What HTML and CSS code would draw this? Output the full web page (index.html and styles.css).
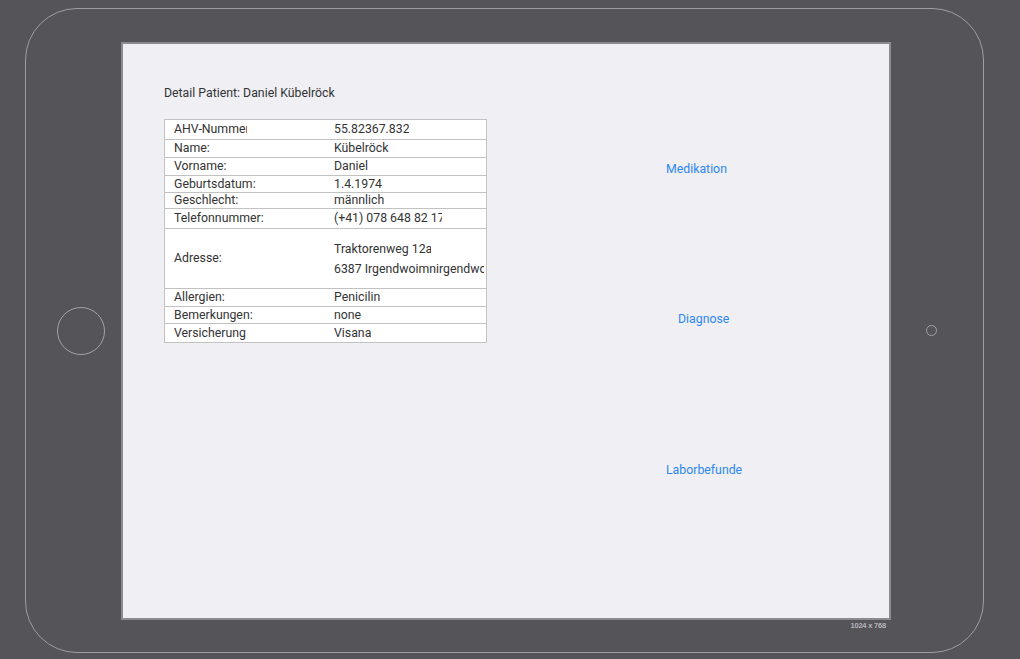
FILE: index.html
```html
<!DOCTYPE html>
<html lang="de">
<head>
<meta charset="utf-8">
<title>Detail Patient</title>
<link rel="stylesheet" href="styles.css">
</head>
<body>
<div class="device">
  <div class="home-button"></div>
  <div class="screen">
    <div class="screen-inner">
      <div class="detail">
        <div class="title">Detail Patient: Daniel Kübelröck</div>
        <div class="table">
          <div class="row h20"><div class="label"><span class="clip-label">AHV-Nummer</span></div><div class="value"><span class="clip-ahv">55.82367.8325</span></div></div>
          <div class="row h18"><div class="label">Name:</div><div class="value">Kübelröck</div></div>
          <div class="row h18"><div class="label">Vorname:</div><div class="value">Daniel</div></div>
          <div class="row h17"><div class="label">Geburtsdatum:</div><div class="value">1.4.1974</div></div>
          <div class="row h16"><div class="label">Geschlecht:</div><div class="value">männlich</div></div>
          <div class="row h20"><div class="label">Telefonnummer:</div><div class="value"><span class="clip-phone">(+41) 078 648 82 17</span></div></div>
          <div class="row h60"><div class="label">Adresse:</div><div class="value address"><span class="clip-street">Traktorenweg 12a</span><span class="clip-addr">6387 Irgendwoimnirgendwo</span></div></div>
          <div class="row h18"><div class="label">Allergien:</div><div class="value">Penicilin</div></div>
          <div class="row h17"><div class="label">Bemerkungen:</div><div class="value">none</div></div>
          <div class="row h19"><div class="label">Versicherung</div><div class="value">Visana</div></div>
        </div>
      </div>
      <div class="links">
        <a class="link link-med" href="#">Medikation</a>
        <a class="link link-diag" href="#">Diagnose</a>
        <a class="link link-labor" href="#">Laborbefunde</a>
      </div>
    </div>
    <div class="size-label">1024 x 768</div>
  </div>
  <div class="side-dot"></div>
</div>
</body>
</html>
```

FILE: styles.css
```css
html, body {
  margin: 0;
  padding: 0;
  background: #555459;
  width: 1020px;
  height: 659px;
  overflow: hidden;
  font-family: Roboto, "Liberation Sans", Arial, sans-serif;
}

.device {
  box-sizing: border-box;
  margin: 8px 0 0 25px;
  width: 959px;
  height: 645px;
  border: 1.5px solid #9e9da2;
  border-radius: 52px;
  display: flex;
  align-items: center;
}

.home-button {
  box-sizing: border-box;
  width: 48px;
  height: 48px;
  margin-left: 31px;
  border: 1.5px solid #a3a2a7;
  border-radius: 50%;
  flex: none;
}

.screen {
  position: relative;
  box-sizing: border-box;
  margin-left: 16px;
  width: 770px;
  height: 578px;
  border: 2px solid #8c8b90;
  background: #efeff4;
  flex: none;
}

.screen-inner {
  display: flex;
  padding: 42px 0 0 41px;
}

.detail {
  width: 323px;
  flex: none;
}

.title {
  font-size: 12.3px;
  line-height: 14px;
  color: #333333;
}

.table {
  margin-top: 19px;
  background: #ffffff;
  border: 1px solid #c2c2c2;
  color: #333333;
  font-size: 12.3px;
  line-height: 14px;
}

.row {
  box-sizing: border-box;
  display: flex;
  align-items: center;
  border-top: 1px solid #c2c2c2;
}

.row:first-child {
  border-top: none;
}

.h16 { height: 16px; }
.h17 { height: 17px; }
.h18 { height: 18px; }
.h19 { height: 19px; }
.h20 { height: 20px; }
.h60 { height: 60px; }
.row.h20:first-child { height: 19px; }

.label {
  box-sizing: border-box;
  width: 169px;
  padding-left: 9px;
  flex: none;
  white-space: nowrap;
}

.value {
  white-space: nowrap;
  overflow: hidden;
}

.address {
  display: flex;
  flex-direction: column;
  gap: 6px;
  padding-top: 1px;
}

.clip-label,
.clip-ahv,
.clip-phone,
.clip-street,
.clip-addr {
  display: block;
  overflow: hidden;
  white-space: nowrap;
}

.clip-label { width: 73px; }
.clip-ahv { width: 75px; }
.clip-phone { width: 108px; }
.clip-street { width: 97px; }
.clip-addr { width: 150px; }

.links {
  display: flex;
  flex-direction: column;
  align-items: flex-start;
  padding-left: 179px;
  font-size: 12.3px;
  line-height: 14px;
}

.link {
  color: #2e87f1;
  text-decoration: none;
}

.link-med { margin-top: 76px; }
.link-diag { margin-top: 136px; margin-left: 12px; }
.link-labor { margin-top: 137px; }

.size-label {
  position: absolute;
  right: 3px;
  top: 100%;
  margin-top: 3px;
  font-family: "Liberation Sans", Arial, sans-serif;
  font-size: 7.5px;
  font-weight: bold;
  color: #b6b6bc;
  letter-spacing: -0.2px;
}

.side-dot {
  box-sizing: border-box;
  width: 11px;
  height: 11px;
  margin-left: 35px;
  border: 1.5px solid #a3a2a7;
  border-radius: 50%;
  flex: none;
}
```
